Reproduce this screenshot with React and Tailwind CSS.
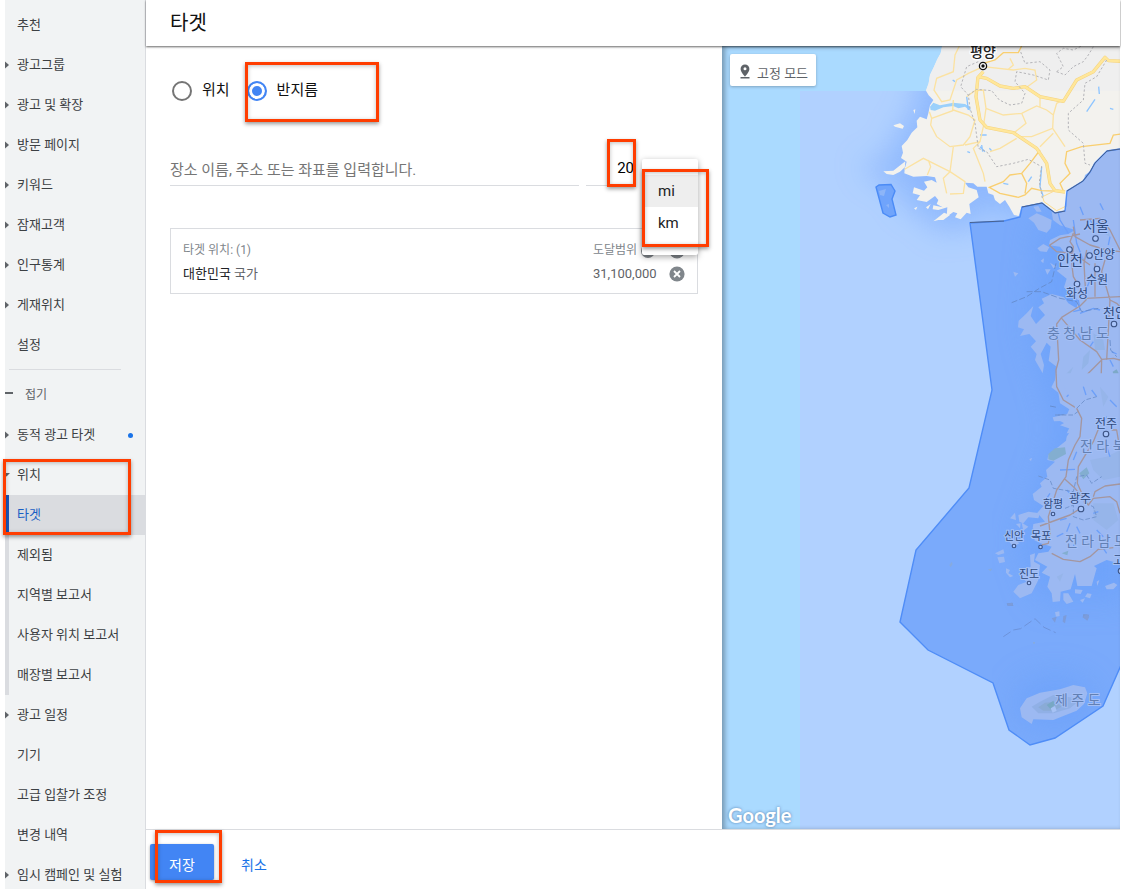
import React, { useState } from "react";

const NAV_TOP = [
  { label: "추천" },
  { label: "광고그룹", arrow: "right" },
  { label: "광고 및 확장", arrow: "right" },
  { label: "방문 페이지", arrow: "right" },
  { label: "키워드", arrow: "right" },
  { label: "잠재고객", arrow: "right" },
  { label: "인구통계", arrow: "right" },
  { label: "게재위치", arrow: "right" },
  { label: "설정" },
];

const NAV_BOTTOM = [
  { label: "광고 일정", arrow: "right" },
  { label: "기기" },
  { label: "고급 입찰가 조정" },
  { label: "변경 내역" },
  { label: "임시 캠페인 및 실험", arrow: "right" },
];

const LOCATION_ITEMS = ["타겟", "제외됨", "지역별 보고서", "사용자 위치 보고서", "매장별 보고서"];

function Highlight({ className }) {
  return (
    <div
      aria-hidden="true"
      className={`pointer-events-none absolute z-20 border-3 border-[#ff3d00] shadow-[0_2px_4px_rgba(0,0,0,0.4),inset_0_1px_4px_rgba(0,0,0,0.25)] ${className}`}
    />
  );
}

function Arrow({ kind }) {
  return (
    <span className="flex w-3 shrink-0 items-center">
      {kind === "right" && (
        <svg width="4" height="8" viewBox="0 0 4 8" fill="#5f6368">
          <path d="M0 0.5 4 4 0 7.5Z" />
        </svg>
      )}
      {kind === "down" && (
        <svg width="5" height="4" viewBox="0 0 5 4" fill="#5f6368">
          <path d="M0 0H5L1.5 3.5 0 2.5Z" />
        </svg>
      )}
    </span>
  );
}

function NavItem({ label, arrow, dot }) {
  return (
    <a href="#" className="flex h-10 shrink-0 items-center whitespace-nowrap pr-3 text-[13px] text-[#3c4043]">
      <Arrow kind={arrow} />
      {label}
      {dot && <span className="ml-auto size-[5px] rounded-full bg-[#1a73e8]" />}
    </a>
  );
}

function Sidebar() {
  return (
    <nav className="flex w-[141px] shrink-0 flex-col border-r border-[#dadce0] bg-[#f1f3f4] pt-[5px]">
      {NAV_TOP.map((item) => (
        <NavItem key={item.label} {...item} />
      ))}
      <hr className="mt-1 mr-6 mb-[5px] ml-1 shrink-0 border-[#dadce0]" />
      <button type="button" className="flex h-10 shrink-0 items-center gap-3 text-xs text-[#5f6368]">
        <span className="mb-1 h-0.5 w-2 bg-[#5f6368]" />
        접기
      </button>
      <NavItem label="동적 광고 타겟" arrow="right" dot />
      <div className="relative shrink-0">
        <NavItem label="위치" arrow="down" />
        {LOCATION_ITEMS.map((label, i) => (
          <a
            key={label}
            href="#"
            className={`flex h-10 items-center whitespace-nowrap border-l-4 pl-2 text-[13px] ${
              i === 0
                ? "border-[#1a56b8] bg-[#dadce0] text-[#1a5fc4]"
                : "border-[#dadce0] text-[#3c4043]"
            }`}
          >
            {label}
          </a>
        ))}
        <Highlight className="top-1 -left-0.5 h-[76px] w-32" />
      </div>
      {NAV_BOTTOM.map((item) => (
        <NavItem key={item.label} {...item} />
      ))}
    </nav>
  );
}

function RemoveIcon() {
  return (
    <svg width="16" height="16" viewBox="0 0 16 16">
      <circle cx="8" cy="8" r="7.6" fill="#80868b" />
      <path d="M5 5 11 11M11 5 5 11" stroke="#fff" strokeWidth="1.8" />
    </svg>
  );
}

function ModeRadio({ label, value, mode, setMode }) {
  return (
    <label className="flex items-center gap-2.5 text-[15px] leading-5 text-[#111]">
      <input
        type="radio"
        name="mode"
        checked={mode === value}
        onChange={() => setMode(value)}
        className="size-5 appearance-none rounded-full border-2 border-[#757575] bg-white checked:border-[#4285f4] checked:bg-[#4285f4] checked:shadow-[inset_0_0_0_3px_#fff]"
      />
      <span className="pb-0.5">{label}</span>
    </label>
  );
}

function TargetForm() {
  const [mode, setMode] = useState("radius");
  return (
    <section className="min-w-0 flex-1 px-6 pt-[34px]">
      <div className="relative flex gap-[17px] pl-0.5">
        <ModeRadio label="위치" value="location" mode={mode} setMode={setMode} />
        <ModeRadio label="반지름" value="radius" mode={mode} setMode={setMode} />
        <Highlight className="-top-[18px] left-[75px] h-[60px] w-[134px]" />
      </div>

      <div className="relative mt-[53px] flex gap-[7px]">
        <input
          type="text"
          aria-label="장소"
          placeholder="장소 이름, 주소 또는 좌표를 입력합니다."
          className="h-[31px] min-w-0 flex-1 border-b border-[#dadce0] text-[15px] text-[#202124] outline-none placeholder:text-[#757575]"
        />
        <input
          type="text"
          aria-label="반지름"
          defaultValue="20"
          className="h-[31px] w-12 border-b border-[#dadce0] pb-1 text-right text-[15px] text-black outline-none"
        />
        <div className="w-[57px]" />
        <Highlight className="-top-4 right-[62px] h-12 w-[29px]" />
        <div
          role="listbox"
          aria-label="단위"
          className="absolute top-1 right-0 z-10 w-14 rounded-xs bg-white py-4 text-[15px] text-[#202124] shadow-[0_2px_6px_rgba(0,0,0,0.35)]"
        >
          <button type="button" role="option" aria-selected="true" className="block h-8 w-full bg-[#eeeeee] pl-4 text-left">
            mi
          </button>
          <button type="button" role="option" aria-selected="false" className="block h-8 w-full pl-4 text-left">
            km
          </button>
          <Highlight className="top-[10px] left-0 h-[78px] w-[67px]" />
        </div>
      </div>

      <div className="mt-[42px] border border-[#dadce0] px-3 pt-2.5 pb-2">
        <table className="w-full table-fixed text-left text-[13px] leading-[23px]">
          <colgroup>
            <col />
            <col className="w-[76px]" />
            <col className="w-4" />
          </colgroup>
          <thead className="text-xs leading-[23px] text-[#80868b]">
            <tr className="h-[23px]">
              <th className="p-0 font-normal">타겟 위치: (1)</th>
              <th className="p-0 font-normal">
                <span className="flex items-center gap-1">
                  도달범위
                  <span className="size-[14px] rounded-full bg-[#80868b]" />
                </span>
              </th>
              <th className="p-0">
                <button type="button" aria-label="모두 삭제" className="block">
                  <RemoveIcon />
                </button>
              </th>
            </tr>
          </thead>
          <tbody>
            <tr className="h-[23px]">
              <td className="p-0 text-[#5f6368]">
                <span className="text-[#202124]">대한민국</span> 국가
              </td>
              <td className="p-0 text-[#5f6368]">31,100,000</td>
              <td className="p-0">
                <button type="button" aria-label="삭제" className="block">
                  <RemoveIcon />
                </button>
              </td>
            </tr>
          </tbody>
        </table>
      </div>
    </section>
  );
}

const CITIES = [
  { name: "서울", x: 1083, y: 231, size: 14, dot: [1095.5, 238.5] },
  { name: "인천", x: 1057, y: 265, size: 14, dot: [1069.5, 249.5] },
  { name: "안양", x: 1093, y: 259, size: 12, dot: [1089.5, 255.5] },
  { name: "수원", x: 1086, y: 284, size: 12, dot: [1097, 269] },
  { name: "화성", x: 1066, y: 298, size: 12, dot: [1077, 284] },
  { name: "천안", x: 1103, y: 317, size: 13, dot: [1114, 324] },
  { name: "전주", x: 1095, y: 428, size: 12, dot: [1106, 434] },
  { name: "광주", x: 1069, y: 503, size: 12, dot: [1081, 509] },
  { name: "함평", x: 1043, y: 508, size: 11, dot: [1053, 514] },
  { name: "신안", x: 1004, y: 540, size: 11, dot: [1014, 546] },
  { name: "목포", x: 1031, y: 540, size: 11, dot: [1040.5, 547] },
  { name: "진도", x: 1019, y: 578, size: 11, dot: [1029, 583] },
  { name: "고흥", x: 1113, y: 565, size: 12, dot: [1121, 571] },
];

const PROVINCES = [
  { name: "충 청 남 도", x: 1047, y: 338 },
  { name: "전 라 북 도", x: 1080, y: 451 },
  { name: "전 라 남 도", x: 1065, y: 546 },
  { name: "제 주 도", x: 1055, y: 705 },
];

const NORTH_COAST =
  "M668 130 662 160 652 178 642 200 630 225 626 250 618 272 626 286 640 300 630 316 625 340 620 358 600 350 590 362 592 382 575 398 562 420 545 438 549 458 543 474 560 485 556 500 540 515 520 525 500 522 490 514 520 512 535 500 556 484 553 520 580 530 620 528 645 532 650 548 635 540 612 545 622 562 612 572 582 562 578 580 600 586 590 600 620 606 645 588 655 600 650 612 668 622 640 616 638 628 655 630 682 622 680 650 700 636 712 640 705 652 722 658 740 638 752 642 748 612 776 592 770 570 745 562 735 548 760 550 772 560 800 560 805 580 820 585 825 600 840 612 855 600 868 620 882 645 896 648 905 620 965 608 1005 638 1035 635 1042 575 1070 562 1092 540 1095 525 1112 513 1122 490 1140 476 1160 455 1205 445V130Z";

const TARGET =
  "M970 223 992 390 969 488 916 550 900 622 928 650 993 683 1009 730 1030 745 1055 738 1103 706 1130 645V145L1120 149 1107 151 1095 163 1090 172 1083 181 1067 191 1065 211 1055 213 1042 203 1022 207 1020 217 1004 221Z";

const MAINLAND_NORTH =
  "M620 -60V20L590 15 574 28 579 60 600 76 645 90 625 102 600 106 570 120 567 136 600 140 615 160 598 190 610 200 590 212 620 236 612 262 640 288 654 300 650 325 625 310 612 292 575 282 545 296 552 310 535 322 555 345 528 372 512 348 520 318 500 340 476 362 474 382 492 388 480 408 508 402 528 424 512 440 530 462 525 480 548 520 552 495 542 462 560 428 572 440 566 482 590 500 585 540 574 562 595 578 600 610 628 628 620 645 580 655 605 665 630 680 620 700H800V-200Z";

const MAINLAND_SOUTH =
  "M290 -20 345 80 340 98 278 112 282 124 325 122 300 136 335 148 320 170 318 182 290 205 265 225 262 240 285 245 258 270 262 290 240 310 245 320 218 342 222 360 250 378 232 398 255 425 220 432 218 445 240 462 222 480 242 490 275 500 265 515 235 520 225 540 262 560 245 578 270 590 262 620 275 640 278 666 300 664 302 635 332 628 345 582 352 618 395 618 410 565 402 558 440 540 470 548 500 540V-20Z";

const ISLANDS = [
  "M150 415 165 398 168 420ZM175 405 205 395 240 400 235 415 205 412 190 430 178 425ZM168 432 182 430 180 445ZM185 428 205 440 190 452ZM210 525 225 520 222 545 240 555 235 600 215 640 180 655 160 635 175 615 200 605 180 590 190 570 212 560Z",
  "M105 520 130 508 133 520 115 525ZM112 532 132 530 135 546 118 550ZM138 565 150 570 145 580 160 588 150 592 138 578ZM145 482 165 480 178 490 160 500ZM310 640 325 640 340 665 320 672 310 660ZM345 628 368 630 362 642 345 640ZM375 650 382 640 395 642 390 655ZM410 605 418 600 412 618ZM435 618 462 608 472 615 460 628 440 628ZM285 697 298 694 299 708 288 710ZM360 660 375 655 368 668ZM208 238 216 233 213 244Z",
];

const NORTH_MINOR_ROADS =
  "M718 138 705 165 700 215 650 235 642 270 665 305 690 300 710 240 745 220 790 200M700 300 698 332 635 355 628 335M635 355 632 375 650 410 690 440 730 435 750 410 765 360 745 345 700 330M735 435 780 425 790 380 798 325 790 270 765 272 740 290M700 440 690 515 735 545 730 580 690 582M550 510 610 475 690 515M625 480 632 500 622 525M690 515 670 535 680 580M780 425 760 445 790 520 795 545M790 200 880 210 915 205 945 210 950 240 920 262M798 325 850 345 905 340 950 318 980 330 1000 345 998 385 935 410 895 410M905 340 918 370 880 400M960 290 960 320M998 385 1035 440M1000 345 1010 310 1030 300M890 415 840 445 810 455M960 440 1000 400M870 175 880 195 865 208";

const SOUTH_ROADS =
  "M568 136 600 115 660 102M568 136 590 155 640 160 690 195M640 80 645 110 690 135 740 150 780 155M660 60 720 55 750 90 780 150M680 150 672 190 678 300 660 318 605 352 590 372 596 480 588 510 590 560 610 600 650 625 662 660 665 700M705 190 705 290M735 180 725 215 750 300 770 310 780 320M678 295 780 290M605 355 660 420 710 455 725 478 760 475 780 480M725 480 655 550 645 580 650 625M725 480 722 580 738 620 735 680M750 300 740 480M738 612 760 590 780 590M640 100 630 125 640 140 635 190 640 230 678 295";

const SOUTH_ROADS_LOW =
  "M350 85 365 115 360 170 345 195 325 240 318 290 290 330 265 410 270 460 265 490 245 495M315 298 345 325 385 375 400 355 450 350 470 365 480 400M240 438 330 405 370 380M418 140 400 185 355 260 352 310 370 350 375 375M400 350 405 335 435 318 480 312M275 520 310 538 360 545 390 530 415 508 460 503M455 150 470 150 475 180 480 190";

function LocationMap() {
  const third = 1 / 3;
  return (
    <section aria-label="지도" className="relative w-[398px] shrink-0 overflow-hidden bg-[#aadaff]">
      <svg
        className="block h-full w-full"
        viewBox="722 46 398 783"
        preserveAspectRatio="xMinYMin slice"
        fontFamily="Roboto, 'Noto Sans CJK KR', sans-serif"
      >
        <defs>
          <filter id="coast" x="-20%" y="-20%" width="140%" height="140%">
            <feGaussianBlur stdDeviation="16" />
          </filter>
          <filter id="shelf" x="-30%" y="-30%" width="160%" height="160%">
            <feGaussianBlur stdDeviation="45" />
          </filter>
          <clipPath id="tiles">
            <rect x="800" y="91" width="400" height="800" />
          </clipPath>
          <clipPath id="area">
            <path d={TARGET} />
          </clipPath>
          <clipPath id="northland">
            <path d={NORTH_COAST} />
          </clipPath>
        </defs>
        <rect x="722" y="46" width="500" height="900" fill="#aadaff" />
        <rect x="800" y="91" width="500" height="900" fill="#b1d1ff" />

        <g clipPath="url(#tiles)">
          <g transform={`translate(720 0) scale(${third})`}>
            <path d={NORTH_COAST} fill="#86b2fd" stroke="#86b2fd" strokeWidth="60" filter="url(#shelf)" opacity="0.8" />
          </g>
        </g>

        <g transform={`translate(720 0) scale(${third})`}>
          <path d={NORTH_COAST} fill="#f3f2ee" />
          <path d="M520 376 540 370 552 378 548 386 525 380ZM580 330 586 328 584 342ZM582 625 592 620 588 630ZM618 622 632 612 624 628ZM640 664 660 648 672 638 690 645 670 660 655 660Z" fill="#f3f2ee" />
          <g clipPath="url(#northland)">
            <path d="M560 130H1210V272H560Z" fill="#efefef" />
            <path d="M630 320 640 308 660 316 700 308 735 312 750 320 752 334 735 320 715 325 700 318 670 322 645 332 632 330Z" fill="#9bd0fb" />
            <path d="M698 240 705 245M742 455 750 458M780 440 795 455M780 405 800 405M850 550 865 553M1100 335 1125 298M1136 260 1138 282M1170 325 1180 328M785 435 788 455M808 445 815 452M740 290 745 330M935 530 925 545M965 500 960 560 970 590" stroke="#8ec5ff" strokeWidth="4" fill="none" />
            <path d={NORTH_MINOR_ROADS} fill="none" stroke="#fbe2a2" strokeWidth="4" />
            <path d="M960 450 930 490 905 520 870 525 850 545 808 562 840 580 895 592 915 585 935 565 965 572 1030 574M905 520 920 550 915 580M1030 572 1020 550 1050 520 1035 490 1040 455 1085 440 1170 430 1180 405 1205 402M790 190 825 180 850 158 895 158 905 138" fill="none" stroke="#f9cf70" strokeWidth="4" />
            <path d="M774 230 768 290 780 360 800 382 880 398 950 445 980 490 990 550 1005 572 1035 576M774 230 800 235 840 258 880 265 915 260 960 290 1030 304 1070 240 1120 215 1155 172 1165 182 1205 184M790 215 774 232" fill="none" stroke="#f5d380" strokeWidth="10" strokeLinejoin="round" />
            <path d="M774 230 768 290 780 360 800 382 880 398 950 445 980 490 990 550 1005 572 1035 576M774 230 800 235 840 258 880 265 915 260 960 290 1030 304 1070 240 1120 215 1155 172 1165 182 1205 184M790 215 774 232" fill="none" stroke="#ffe79a" strokeWidth="7" strokeLinejoin="round" />
            <path d="M1005 572 968 590 972 605 1010 632 1035 620" fill="none" stroke="#fbdc90" strokeWidth="3" />
            <path d="M775 185 740 200 722 260 745 285 750 325 765 370 775 445 800 455 830 500 880 490 925 478 965 500 958 545 968 600M745 285 770 268 815 272 838 300 870 315 905 310 915 280 885 245 890 215 940 225 985 240 990 210 960 185 915 190 900 150M1010 215 1030 200 1010 160 1030 145 1060 150 1085 138M1010 215 1035 225 1060 200 1090 185 1105 165 1120 140M1160 180 1130 230 1095 250 1090 300 1045 340 1045 390 1090 430 1095 490 1110 495" fill="none" stroke="#b4b4b8" strokeWidth="3" strokeDasharray="7 6" />
          </g>
        </g>

        <path d="M876 187 879 185 891 184.500 895 191 892 199 896 215 890 217 883 213Z" fill="#70a4fb" stroke="#4b8bf6" strokeWidth="1.400" />
        <path d="M879 191 886 189 884 196 880 195ZM886 205 889 204 889 208Z" fill="#8db5f8" />

        <path d={TARGET} fill="#7aaafb" />
        <g clipPath="url(#area)">
          <g filter="url(#coast)" opacity="0.7">
            <path d="M1040 220H1130V600H1040L1020 540 1060 430 1030 330Z" fill="#6aa0fa" />
            <ellipse cx="1055" cy="702" rx="40" ry="26" fill="#6aa0fa" />
          </g>
          <g transform={`translate(860 200) scale(${third})`} fill="#9cb9f2">
            <path d={MAINLAND_NORTH} />
            <path d="M505 55 530 40 550 48 575 60 572 85 560 98 535 90 522 68ZM532 145 550 132 568 142 560 156 540 154ZM520 20 535 18 545 35 530 35ZM542 182 552 175 550 190ZM555 208 572 208 562 224ZM570 188 590 200 580 205ZM460 215 475 220 465 230Z" />
            <path d="M670 470 690 450 685 490 665 510ZM700 400 730 420 735 450 705 450ZM600 540 640 500 625 535ZM715 90 740 70 750 110ZM640 610 675 650 650 640Z" fill="#93b4e8" />
            <path d="M758 515 770 508 776 520 765 540Z" fill="#7da9c8" />
            <path d="M590 20 600 60 625 100M640 60 650 130 670 180M690 60 700 75 720 68M660 340 700 325 720 330M655 400 665 420M690 440 700 425M760 500 750 480M615 540 620 560M640 585 650 600M690 240 680 265M750 110 745 135M655 300 660 330 640 335M685 380 690 395M710 560 722 550M755 455 770 462M720 10 730 30M660 20 670 45M730 640 750 645M620 590 640 570" stroke="#6c9ff9" strokeWidth="4" fill="none" />
            <path d="M455 308 500 290 538 265 575 245 588 190M500 275 545 275 600 295 650 305 665 335 715 325M570 618 590 622M595 645 640 645 670 620 680 595 710 592M750 420 752 450 770 470" stroke="#6489c8" strokeWidth="2.500" strokeDasharray="18 7" fill="none" />
            <path d={SOUTH_ROADS} fill="none" stroke="#a4969f" strokeWidth="4" strokeLinejoin="round" />
          </g>
          <g transform={`translate(960 380) scale(${third})`} fill="#9cb9f2">
            <path d={MAINLAND_SOUTH} />
            {ISLANDS.map((d) => (
              <path key={d} d={d} />
            ))}
            <path d="M390 240 440 230 480 210V290L430 300 400 270ZM400 370 460 370 475 420 440 450 400 420ZM290 590 310 580 300 605ZM420 20 445 50 430 80Z" fill="#96b5ea" />
            <path d="M265 222 285 205 315 202 318 222 280 242 265 238ZM358 280 380 262 388 280 370 298ZM305 520 325 512 322 526ZM85 568 95 566 92 574Z" fill="#83aed0" />
            <path d="M140 670 158 668 160 678 142 677ZM370 702 388 704 380 718 368 712Z" fill="#7799d6" />
            <path d="M300 270 345 268M330 430 320 455M395 30 410 50M440 110 430 130M290 470 310 460M440 200 450 230M350 440 360 460M260 355 270 340M385 210 375 225M410 450 430 470M300 420 320 415M370 20 378 45M400 400 415 395M340 240 350 215M450 60 470 80M320 330 335 345M420 490 440 520M340 500 350 480" stroke="#6c9ff9" strokeWidth="4" fill="none" />
            <path d="M235 288 270 300 280 325 340 335 350 290 380 285 395 310 425 290M315 385 340 375 340 410 370 420 410 410 400 380 375 370M350 85 375 60 410 50M285 105 340 105 360 90" stroke="#6c8fc9" strokeWidth="2.500" strokeDasharray="14 6" fill="none" />
            <path d={SOUTH_ROADS_LOW} fill="none" stroke="#a4969f" strokeWidth="4" strokeLinejoin="round" />
          </g>
          <g transform={`translate(880 560) scale(${third})`}>
            <path d="M420 445 440 415 480 398 540 388 580 375 615 382 622 400 612 432 590 452 550 468 520 480 460 478 455 492 425 472Z" fill="#9cb9f2" />
            <path d="M455 440 480 425 520 405 570 412 600 420 570 445 520 460 475 460Z" fill="#90b0e6" />
            <path d="M475 442 495 428 525 425 545 440 520 452 490 452Z" fill="#8aabd6" />
            <path d="M500 435 520 422 525 432 512 448Z" fill="#78a8c4" />
            <path d="M512 445 525 438 530 452 518 458Z" fill="#a6c2f5" />
            <path d="M370 230 400 210 422 206 465 176 492 202 527 218" fill="none" stroke="#6d93da" strokeWidth="3" strokeDasharray="26 10" />
            <path d="M382 132 395 128 400 136 385 137ZM515 175 530 170 525 188ZM550 168 560 165 555 190 548 185ZM608 172 620 162 628 170 622 182Z" fill="#7c9cda" />
            <path d="M208 15 215 5 218 12 212 22ZM324 28 335 26 333 34ZM459 246H465V251H459Z" fill="#86aadf" />
          </g>
        </g>
        <path d={TARGET} fill="none" stroke="#4f8df7" strokeWidth="1.400" />
        <path d="M1120 149 1107 151 1095 163 1090 172 1083 181 1067 191M1065 211 1055 213 1042 203 1022 207M1004 221 970 222.500" fill="none" stroke="#4a5c80" strokeWidth="0.900" />

        {PROVINCES.map((p) => (
          <text key={p.name} x={p.x} y={p.y} fontSize="14" fill="#6280b4" stroke="#a4bff5" strokeWidth="2" paintOrder="stroke">
            {p.name}
          </text>
        ))}
        {CITIES.map((c) => (
          <g key={c.name}>
            <circle cx={c.dot[0]} cy={c.dot[1]} r={c.size > 11 ? 2.8 : 1.8} fill="#a9c5fa" stroke="#3a5284" strokeWidth="1.100" />
            <text x={c.x} y={c.y} fontSize={c.size} fill="#304a7c" stroke="#a4c1f8" strokeWidth="2" paintOrder="stroke">
              {c.name}
            </text>
          </g>
        ))}
        <text x="970" y="57" fontSize="14" fontWeight="500" fill="#222" stroke="#fff" strokeWidth="2.500" paintOrder="stroke">
          평양
        </text>
        <circle cx="983" cy="66" r="3.600" fill="#fff" stroke="#111" strokeWidth="1.300" />
        <circle cx="983" cy="66" r="1.700" fill="#111" />
      </svg>
      <button
        type="button"
        className="absolute top-2 left-2 flex h-8 items-center gap-[5px] rounded-xs bg-white px-2 pt-1 text-[13px] text-[#5f6368] shadow-[0_1px_3px_rgba(0,0,0,0.25)]"
      >
        <svg width="14" height="16" viewBox="0 0 14 16" fill="#5f6368">
          <path fillRule="evenodd" d="M7 .5A4.400 4.400 0 0 0 2.600 5C2.600 8 7 12.600 7 12.600S11.400 8 11.400 5A4.400 4.400 0 0 0 7 .5ZM7 3.300A1.500 1.500 0 1 1 7 6.300 1.500 1.500 0 0 1 7 3.300Z" />
          <path d="M2.500 13H11.500V14.500H2.500Z" />
        </svg>
        <span className="pt-1">고정 모드</span>
      </button>
      <a
        href="#"
        className="absolute bottom-0.5 left-1.5 font-['Lato'] text-xl leading-6 font-bold text-white [text-shadow:0_0_3px_rgba(60,100,150,0.8)]"
      >
        Google
      </a>
      <div className="pointer-events-none absolute inset-0 shadow-[inset_3px_1px_5px_rgba(0,0,0,0.3)]" />
    </section>
  );
}

export default function App() {
  return (
    <div className="flex h-screen overflow-hidden bg-white pr-px pb-0.5 pl-[5px] font-[Roboto,'Noto_Sans_CJK_KR',sans-serif]">
      <Sidebar />
      <main className="flex min-w-0 flex-1 flex-col">
        <header className="relative z-10 flex h-[46px] shrink-0 items-center bg-white px-6 shadow-[0_1px_2px_rgba(0,0,0,0.6)]">
          <h1 className="text-xl text-[#111]">타겟</h1>
        </header>
        <div className="flex min-h-0 flex-1">
          <TargetForm />
          <LocationMap />
        </div>
        <footer className="relative flex h-[60px] shrink-0 items-start border-t border-[#dadce0] pt-3.5 pl-1 text-sm">
          <button type="button" className="h-9 w-16 rounded-xs bg-[#4285f4] pt-1.5 text-white shadow-[0_1px_3px_rgba(0,0,0,0.35)]">
            저장
          </button>
          <button type="button" className="ml-[27px] h-9 pt-1.5 text-[#1a73e8]">
            취소
          </button>
          <Highlight className="top-0 left-[9px] h-[53px] w-[67px]" />
        </footer>
      </main>
    </div>
  );
}
